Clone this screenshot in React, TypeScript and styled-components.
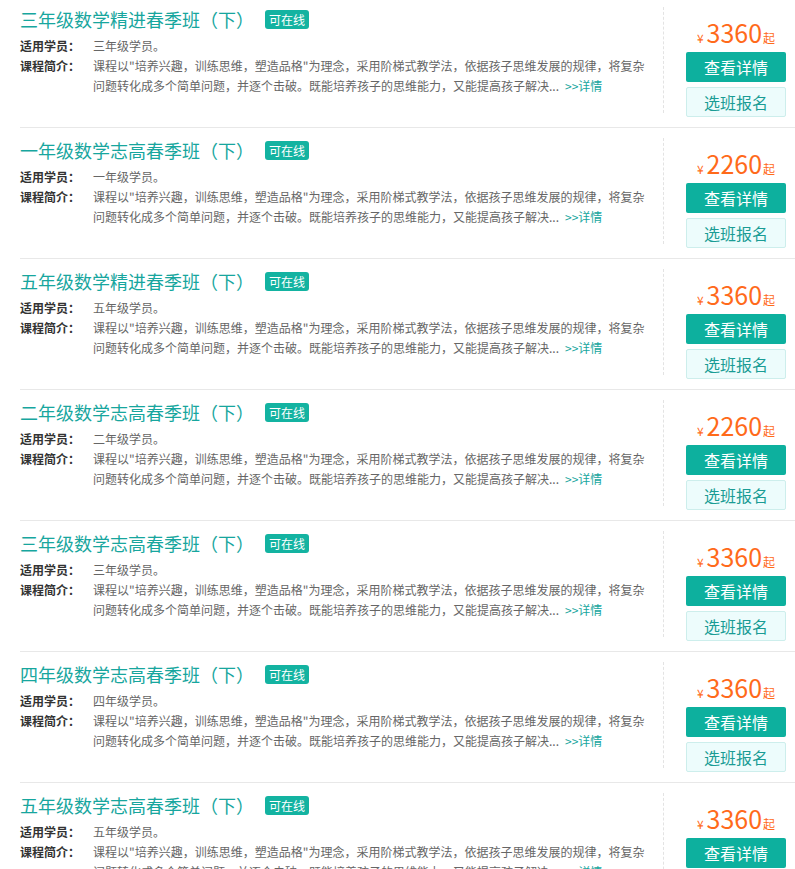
import React from "react";
import styled, { createGlobalStyle } from "styled-components";

const GlobalStyle = createGlobalStyle`
  body {
    margin: 0;
    background: #fff;
    font-family: "Microsoft YaHei", "Noto Sans CJK SC", "Noto Sans", sans-serif;
  }
`;

const teal = "#17a69e";

const ListStyle = styled.div`
  margin-top: -3px;
  width: 795px;
  overflow: hidden;
`;

const CardStyle = styled.div`
  display: flex;
  margin-left: 20px;
  height: 130px;
  border-bottom: 1px solid #e8e8e8;
`;

const MainCol = styled.div`
  width: 643px;
  padding-top: 7px;
`;

const TitleRow = styled.div`
  display: flex;
  align-items: center;
  height: 30px;
  margin-bottom: 2px;
  font-size: 18px;
  color: ${teal};
  white-space: nowrap;
`;

const Tag = styled.span`
  margin-left: 11px;
  height: 19px;
  line-height: 19px;
  padding: 0 4px;
  border-radius: 3px;
  background: #13b3a1;
  color: #fff;
  font-size: 12px;
`;

const InfoRow = styled.div`
  display: flex;
  font-size: 12px;
  line-height: 20px;
`;

const Label = styled.div`
  width: 73px;
  flex-shrink: 0;
  font-weight: bold;
  color: #333;
`;

const Value = styled.div`
  width: 552px;
  color: #666;
  white-space: nowrap;
`;

const More = styled.a`
  margin-left: 6px;
  color: ${teal};
  text-decoration: none;
  cursor: pointer;
`;

const SideCol = styled.div`
  position: relative;
  width: 132px;
  padding: 18px 0 0 23px;
  box-sizing: border-box;

  &::before {
    content: "";
    position: absolute;
    left: 0;
    top: 10px;
    height: 106px;
    border-left: 1px dashed #e3e3e3;
  }
`;

const Price = styled.div`
  width: 100px;
  height: 34px;
  line-height: 34px;
  text-align: center;
  color: #ff6a1a;
  white-space: nowrap;

  small {
    font-size: 12px;
  }

  strong {
    font-size: 25px;
    font-weight: normal;
    margin: 0 1px 0 3px;
  }
`;

const Button = styled.div<{ $primary?: boolean }>`
  width: 100px;
  height: 30px;
  line-height: ${(p) => (p.$primary ? "30px" : "28px")};
  margin-top: ${(p) => (p.$primary ? "3px" : "5px")};
  box-sizing: border-box;
  border-radius: 2px;
  text-align: center;
  font-size: 16px;
  cursor: pointer;
  background: ${(p) => (p.$primary ? "#0db09e" : "#edfcfc")};
  color: ${(p) => (p.$primary ? "#fff" : "#1a9c95")};
  border: ${(p) => (p.$primary ? "none" : "1px solid #cdeeec")};
`;

const intro1 =
  "课程以\"培养兴趣，训练思维，塑造品格\"为理念，采用阶梯式教学法，依据孩子思维发展的规律，将复杂";
const intro2 = "问题转化成多个简单问题，并逐个击破。既能培养孩子的思维能力，又能提高孩子解决...";

type Course = { title: string; grade: string; price: number };

const courses: Course[] = [
  { title: "三年级数学精进春季班（下）", grade: "三年级学员。", price: 3360 },
  { title: "一年级数学志高春季班（下）", grade: "一年级学员。", price: 2260 },
  { title: "五年级数学精进春季班（下）", grade: "五年级学员。", price: 3360 },
  { title: "二年级数学志高春季班（下）", grade: "二年级学员。", price: 2260 },
  { title: "三年级数学志高春季班（下）", grade: "三年级学员。", price: 3360 },
  { title: "四年级数学志高春季班（下）", grade: "四年级学员。", price: 3360 },
  { title: "五年级数学志高春季班（下）", grade: "五年级学员。", price: 3360 },
];

function CourseCard({ title, grade, price }: Course) {
  return (
    <CardStyle>
      <MainCol>
        <TitleRow>
          {title}
          <Tag>可在线</Tag>
        </TitleRow>
        <InfoRow>
          <Label>适用学员：</Label>
          <Value>{grade}</Value>
        </InfoRow>
        <InfoRow>
          <Label>课程简介：</Label>
          <Value>
            {intro1}
            <br />
            {intro2}
            <More>&gt;&gt;详情</More>
          </Value>
        </InfoRow>
      </MainCol>
      <SideCol>
        <Price>
          <small>¥</small>
          <strong>{price}</strong>
          <small>起</small>
        </Price>
        <Button $primary>查看详情</Button>
        <Button>选班报名</Button>
      </SideCol>
    </CardStyle>
  );
}

export default function App() {
  return (
    <>
      <GlobalStyle />
      <ListStyle>
        {courses.map((c, i) => (
          <CourseCard key={i} {...c} />
        ))}
      </ListStyle>
    </>
  );
}
